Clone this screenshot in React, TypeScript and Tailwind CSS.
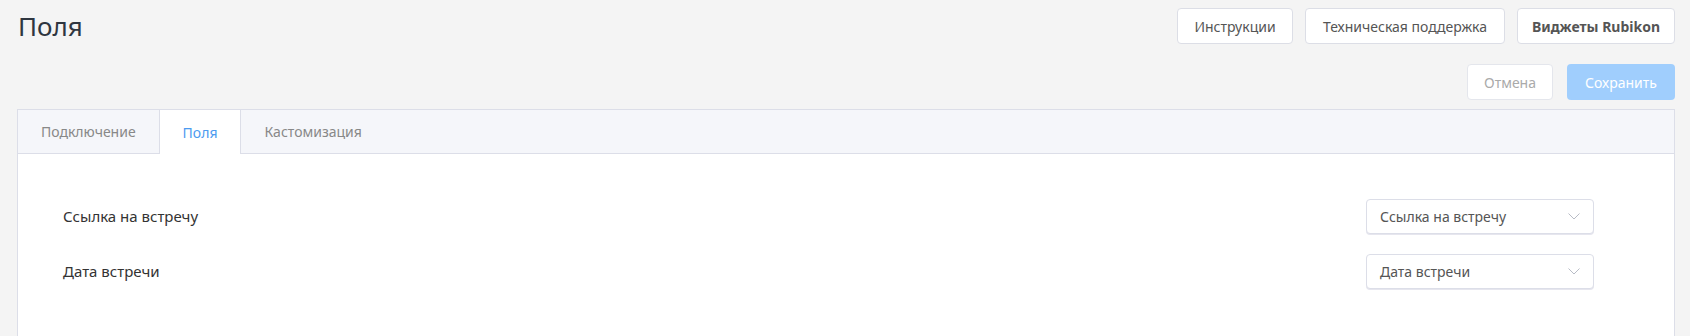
import React, { useState } from 'react';

const tabs = ['Подключение', 'Поля', 'Кастомизация'];

const fields = [
  { label: 'Ссылка на встречу', value: 'Ссылка на встречу' },
  { label: 'Дата встречи', value: 'Дата встречи' },
];

function Chevron() {
  return (
    <svg width="12" height="7" viewBox="0 0 12 7" fill="none">
      <path d="M0.5 0.5L6 6L11.5 0.5" stroke="#b8bcc6" strokeWidth="1" />
    </svg>
  );
}

export default function App() {
  const [active, setActive] = useState(1);

  return (
    <div
      className="min-h-[336px] bg-[#f4f4f4] pl-[17px] pr-[15px] pt-[8px] text-[#555]"
      style={{ fontFamily: '"Noto Sans", "Open Sans", sans-serif' }}
    >
      <div className="flex h-[36px] items-start justify-between">
        <h1 className="ml-[1px] pt-[1px] text-[26px] leading-[34px] text-[#2f3640]">Поля</h1>
        <div className="flex gap-[12px]">
          <button className="h-[36px] w-[116px] rounded-[4px] border border-[#dcdee6] bg-white text-[14px] text-[#555]">
            Инструкции
          </button>
          <button className="h-[36px] w-[200px] rounded-[4px] border border-[#dcdee6] bg-white text-[14px] text-[#555]">
            Техническая поддержка
          </button>
          <button className="h-[36px] w-[158px] rounded-[4px] border border-[#dcdee6] bg-white text-[14px] font-bold text-[#555]">
            Виджеты Rubikon
          </button>
        </div>
      </div>

      <div className="mt-[20px] flex justify-end gap-[14px]">
        <button className="h-[36px] w-[86px] rounded-[4px] border border-[#e4e6ec] bg-white text-[14px] text-[#aaa]">
          Отмена
        </button>
        <button className="h-[36px] w-[108px] rounded-[4px] bg-[#a0cefd] text-[14px] text-white">
          Сохранить
        </button>
      </div>

      <div className="mt-[9px] min-h-[230px] border border-[#dcdee8] bg-white">
        <div className="flex h-[44px] border-b border-[#dcdee8] bg-[#f5f6fa]">
          {tabs.map((t, i) => (
            <button
              key={t}
              onClick={() => setActive(i)}
              className={
                i === active
                  ? '-mb-px h-[44px] border-x border-[#dcdee8] bg-white px-[23px] text-[14px] text-[#4c9bf0]'
                  : 'h-[43px] px-[23px] text-[14px] text-[#888]'
              }
            >
              {t}
            </button>
          ))}
        </div>

        <div className="flex flex-col gap-[20px] pb-[40px] pl-[45px] pr-[80px] pt-[45px]">
          {fields.map((f) => (
            <div key={f.label} className="flex items-center justify-between">
              <span className="text-[15px] text-[#333]">{f.label}</span>
              <div className="flex h-[35px] w-[228px] items-center justify-between rounded-[4px] border border-[#dcdee8] bg-white pl-[13px] pr-[13px] shadow-[0_1px_0_#e6e6ee]">
                <span className="text-[14px] text-[#555]">{f.value}</span>
                <Chevron />
              </div>
            </div>
          ))}
        </div>
      </div>
    </div>
  );
}
